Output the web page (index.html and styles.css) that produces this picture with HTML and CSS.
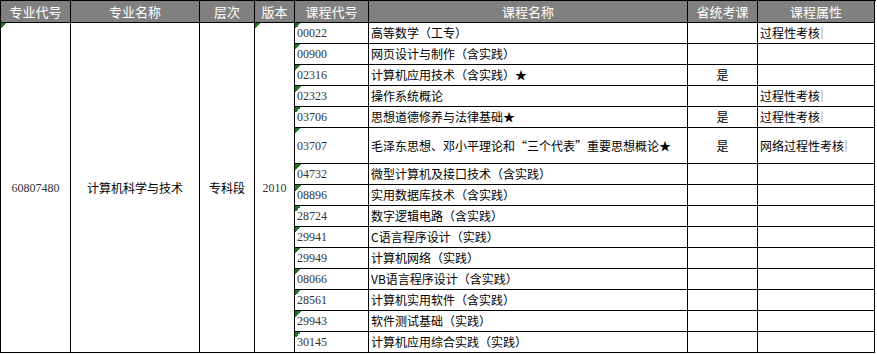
FILE: index.html
```html
<!DOCTYPE html>
<html lang="zh">
<head>
<meta charset="utf-8">
<title>课程表</title>
<link rel="stylesheet" href="styles.css">
</head>
<body>
<div class="grid">
  <div class="th">专业代号</div>
  <div class="th">专业名称</div>
  <div class="th">层次</div>
  <div class="th">版本</div>
  <div class="th">课程代号</div>
  <div class="th">课程名称</div>
  <div class="th">省统考课</div>
  <div class="th">课程属性</div>

  <div class="td span num center mark col1">60807480</div>
  <div class="td span center col2">计算机科学与技术</div>
  <div class="td span center col3">专科段</div>
  <div class="td span num center mark col4">2010</div>

  <div class="td num mark">00022</div><div class="td">高等数学（工专）</div><div class="td center"></div><div class="td">过程性考核<span class="caret"></span></div>
  <div class="td num mark">00900</div><div class="td">网页设计与制作（含实践）</div><div class="td center"></div><div class="td"></div>
  <div class="td num mark">02316</div><div class="td">计算机应用技术（含实践）★</div><div class="td center">是</div><div class="td"></div>
  <div class="td num mark">02323</div><div class="td">操作系统概论</div><div class="td center"></div><div class="td">过程性考核<span class="caret"></span></div>
  <div class="td num mark">03706</div><div class="td">思想道德修养与法律基础★</div><div class="td center">是</div><div class="td">过程性考核<span class="caret"></span></div>
  <div class="td num mark">03707</div><div class="td">毛泽东思想、邓小平理论和“三个代表”重要思想概论★</div><div class="td center">是</div><div class="td">网络过程性考核<span class="caret"></span></div>
  <div class="td num mark">04732</div><div class="td">微型计算机及接口技术（含实践）</div><div class="td center"></div><div class="td"></div>
  <div class="td num mark">08896</div><div class="td">实用数据库技术（含实践）</div><div class="td center"></div><div class="td"></div>
  <div class="td num mark">28724</div><div class="td">数字逻辑电路（含实践）</div><div class="td center"></div><div class="td"></div>
  <div class="td num mark">29941</div><div class="td">C语言程序设计（实践）</div><div class="td center"></div><div class="td"></div>
  <div class="td num mark">29949</div><div class="td">计算机网络（实践）</div><div class="td center"></div><div class="td"></div>
  <div class="td num mark">08066</div><div class="td">VB语言程序设计（含实践）</div><div class="td center"></div><div class="td"></div>
  <div class="td num mark">28561</div><div class="td">计算机实用软件（含实践）</div><div class="td center"></div><div class="td"></div>
  <div class="td num mark">29943</div><div class="td">软件测试基础（实践）</div><div class="td center"></div><div class="td"></div>
  <div class="td num mark">30145</div><div class="td">计算机应用综合实践（实践）</div><div class="td center"></div><div class="td"></div>
</div>
</body>
</html>
```
FILE: styles.css
```css
html, body {
  margin: 0;
  padding: 0;
  background: #fff;
}
body {
  font-family: "Noto Sans CJK SC", "Liberation Sans", sans-serif;
  font-size: 12px;
  color: #000;
}
.grid {
  display: grid;
  width: 876px;
  box-sizing: border-box;
  border-top: 1px solid #000;
  border-left: 1px solid #000;
  grid-template-columns: 70px 129px 55px 40px 74px 319px 70px 117px;
  grid-template-rows: 22px repeat(5, 21px) 36px repeat(9, 21px);
}
.th, .td {
  box-sizing: border-box;
  border-right: 1px solid #000;
  border-bottom: 1px solid #000;
  display: flex;
  align-items: center;
  white-space: nowrap;
  overflow: hidden;
  position: relative;
  line-height: 14px;
}
.th {
  background: #808080;
  color: #fff;
  font-size: 13px;
  justify-content: center;
}
.td {
  padding: 0 2px;
}
.td.span {
  grid-row: 2 / span 15;
}
.col1 { grid-column: 1; }
.col2 { grid-column: 2; }
.col3 { grid-column: 3; }
.col4 { grid-column: 4; }
.td.center {
  justify-content: center;
}
.td.num {
  font-family: "Liberation Serif", serif;
  font-size: 12px;
  color: #333;
}
.td.mark::before {
  content: "";
  position: absolute;
  left: 0;
  top: 0;
  width: 6px;
  height: 6px;
  background: linear-gradient(135deg, #1b7a1b 0, #1b7a1b 50%, rgba(255,255,255,0) 50%);
}
.caret {
  display: inline-block;
  width: 2px;
  height: 12px;
  margin-left: 1px;
  background: #c9d9e8;
}
```
